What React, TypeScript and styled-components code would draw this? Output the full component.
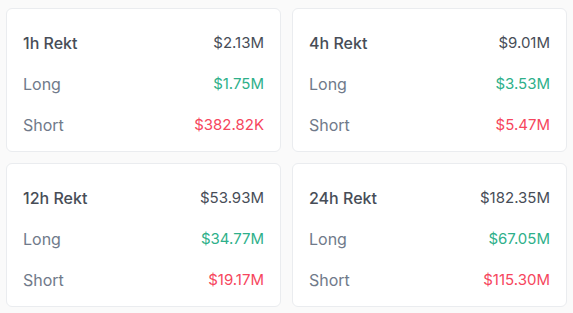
import React from "react";
import styled, { createGlobalStyle } from "styled-components";

const Global = createGlobalStyle`
  html, body { margin: 0; padding: 0; background: #fafafa; }
  body { font-family: "Inter", "Open Sans", sans-serif; }
`;

const Grid = styled.div`
  display: grid;
  grid-template-columns: 275px 275px;
  gap: 11px;
  padding: 8px 6px;
`;

const Card = styled.div`
  background: #ffffff;
  border: 1px solid #eaecef;
  border-radius: 6px;
  padding: 22px 16px 14px;
  display: flex;
  flex-direction: column;
  gap: 17px;
`;

const Row = styled.div`
  display: flex;
  justify-content: space-between;
  align-items: center;
  height: 24px;
  font-size: 16px;
  line-height: 24px;
`;

const Label = styled.span<{ $title?: boolean }>`
  color: ${(p) => (p.$title ? "#474d57" : "#707a8a")};
  font-weight: ${(p) => (p.$title ? 500 : 400)};
`;

const Value = styled.span<{ $tone: "neutral" | "up" | "down" }>`
  font-size: 15px;
  color: ${(p) =>
    p.$tone === "up" ? "#2eb08a" : p.$tone === "down" ? "#f6465d" : "#474d57"};
`;

const data = [
  { title: "1h Rekt", total: "$2.13M", long: "$1.75M", short: "$382.82K" },
  { title: "4h Rekt", total: "$9.01M", long: "$3.53M", short: "$5.47M" },
  { title: "12h Rekt", total: "$53.93M", long: "$34.77M", short: "$19.17M" },
  { title: "24h Rekt", total: "$182.35M", long: "$67.05M", short: "$115.30M" },
];

export default function App() {
  return (
    <>
      <Global />
      <Grid>
        {data.map((d) => (
          <Card key={d.title}>
            <Row>
              <Label $title>{d.title}</Label>
              <Value $tone="neutral">{d.total}</Value>
            </Row>
            <Row>
              <Label>Long</Label>
              <Value $tone="up">{d.long}</Value>
            </Row>
            <Row>
              <Label>Short</Label>
              <Value $tone="down">{d.short}</Value>
            </Row>
          </Card>
        ))}
      </Grid>
    </>
  );
}
